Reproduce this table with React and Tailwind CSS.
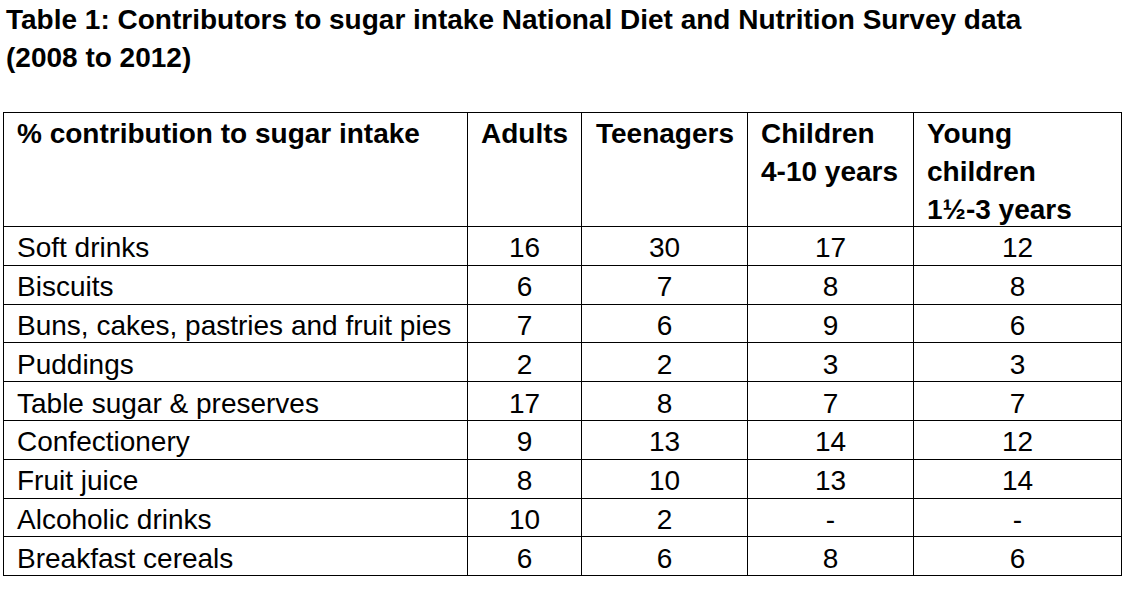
const rows = [
  ["Soft drinks", "16", "30", "17", "12"],
  ["Biscuits", "6", "7", "8", "8"],
  ["Buns, cakes, pastries and fruit pies", "7", "6", "9", "6"],
  ["Puddings", "2", "2", "3", "3"],
  ["Table sugar & preserves", "17", "8", "7", "7"],
  ["Confectionery", "9", "13", "14", "12"],
  ["Fruit juice", "8", "10", "13", "14"],
  ["Alcoholic drinks", "10", "2", "-", "-"],
  ["Breakfast cereals", "6", "6", "8", "6"],
];

function Head({ children, pad = "pl-[13px]" }) {
  return (
    <th className={`border border-black p-0 text-left align-top font-bold ${pad}`}>
      {/* fixed box so the third header line can hang to the border like the source */}
      <div className="h-[113px] pt-[2px] whitespace-nowrap">{children}</div>
    </th>
  );
}

export default function App() {
  return (
    <div className="w-[1130px] h-[597px] bg-white text-black font-['Liberation_Sans',Arial,sans-serif]">
      <h1 className="pl-[6px] pt-[1px] text-[28px] leading-[38px] font-bold">
        Table 1: Contributors to sugar intake National Diet and Nutrition Survey data
        <br />
        (2008 to 2012)
      </h1>

      <table className="ml-[3px] mt-[35px] w-[1118px] table-fixed border-collapse text-[28px]">
        <colgroup>
          <col className="w-[464px]" />
          <col className="w-[114px]" />
          <col className="w-[166px]" />
          <col className="w-[166px]" />
          <col className="w-[208px]" />
        </colgroup>
        <thead>
          <tr className="leading-[38px]">
            <Head>% contribution to sugar intake</Head>
            <Head>Adults</Head>
            <Head pad="pl-[14px]">Teenagers</Head>
            <Head>
              Children
              <br />
              4-10 years
            </Head>
            <Head>
              Young
              <br />
              children
              <br />
              1½-3 years
            </Head>
          </tr>
        </thead>
        <tbody>
          {rows.map((r) => (
            <tr key={r[0]} className="h-[38.8px] leading-[30px]">
              <td className="border border-black pl-[13px] pt-[5px] pb-0 whitespace-nowrap">{r[0]}</td>
              {r.slice(1).map((v, i) => (
                <td key={i} className="border border-black pt-[5px] pb-0 text-center">
                  {v}
                </td>
              ))}
            </tr>
          ))}
        </tbody>
      </table>
    </div>
  );
}
